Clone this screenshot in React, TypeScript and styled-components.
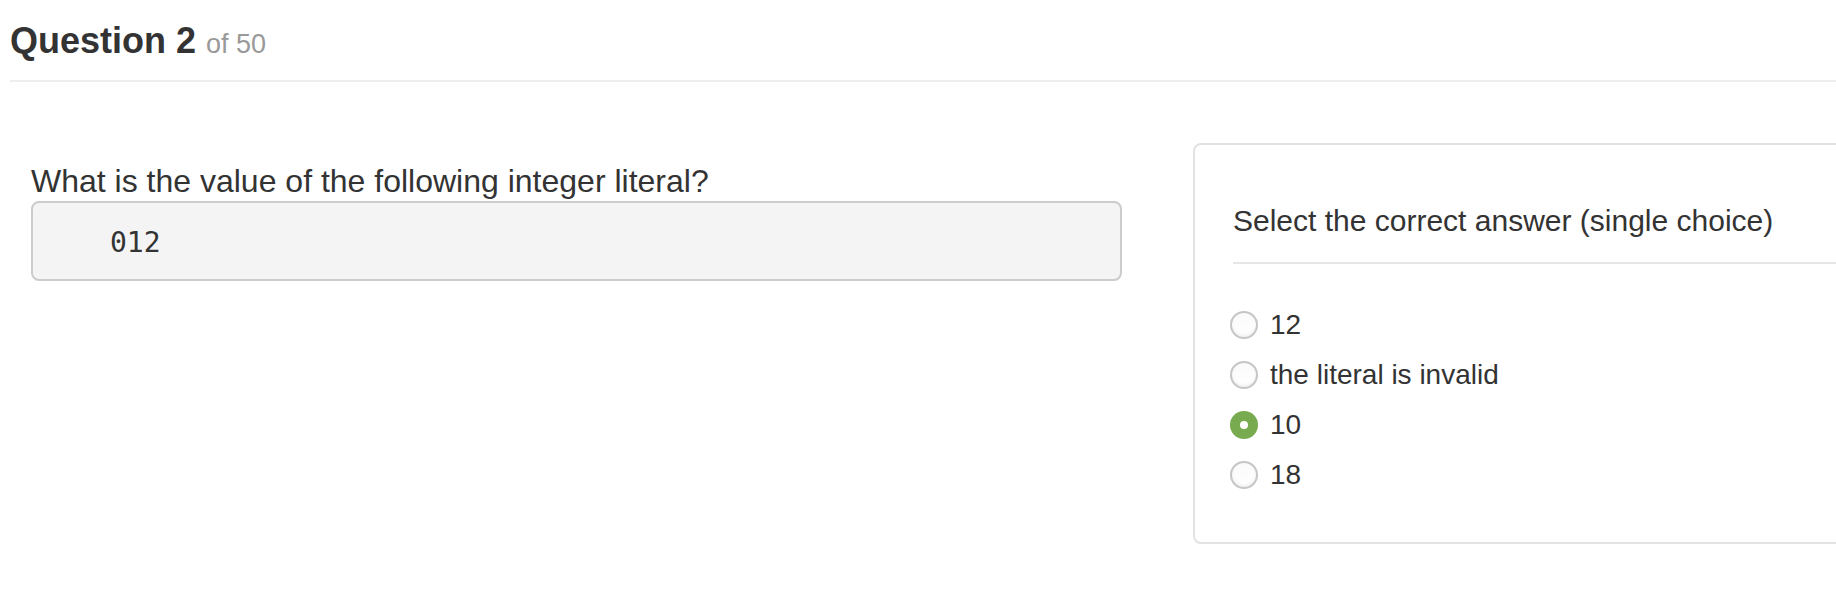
import React from "react";
import styled, { createGlobalStyle } from "styled-components";

const GlobalStyle = createGlobalStyle`
    html, body {
        margin: 0;
        padding: 0;
        background: #fff;
        overflow: hidden;
    }
    body {
        font-family: "Liberation Sans", Arial, Helvetica, sans-serif;
        color: #333;
    }
`;

const Page = styled.div`
    width: 100%;
    height: 598px;
    overflow: hidden;
`;

const Header = styled.header`
    margin-left: 10px;
    padding: 21px 0 19px;
    border-bottom: 2px solid #eee;
`;

const Title = styled.h1`
    margin: 0;
    font-size: 36px;
    line-height: 40px;
    font-weight: 700;
    color: #333;
`;

const Counter = styled.small`
    font-size: 27px;
    line-height: 1;
    font-weight: 400;
    color: #999;
`;

const Main = styled.main`
    display: flex;
    align-items: flex-start;
    gap: 71px;
    margin-top: 61px;
    padding-left: 31px;
`;

const QuestionColumn = styled.section`
    flex: 0 0 1091px;
    padding-top: 20px;
`;

const QuestionText = styled.p`
    margin: 0 0 2px;
    font-size: 32px;
    line-height: 36px;
`;

const CodeBlock = styled.pre`
    box-sizing: border-box;
    height: 80px;
    margin: 0;
    padding: 20px 18px 16px 77px;
    background: #f4f4f4;
    border: 2px solid #ccc;
    border-radius: 8px;
    font-family: "DejaVu Sans Mono", "Liberation Mono", monospace;
    font-size: 28px;
    line-height: 40px;
    color: #333;
`;

const AnswerPanel = styled.section`
    flex: 0 0 720px;
    box-sizing: border-box;
    padding: 59px 0 42px 38px;
    border: 2px solid #e2e2e2;
    border-radius: 8px;
    background: #fff;
`;

const PanelTitle = styled.h2`
    margin: 0;
    font-size: 30px;
    line-height: 34px;
    font-weight: 400;
    color: #333;
`;

const Rule = styled.hr`
    margin: 24px 0 0;
    border: 0;
    border-top: 2px solid #e6e6e6;
`;

const OptionList = styled.div`
    display: flex;
    flex-direction: column;
    margin-top: 36px;
    margin-left: -3px;
`;

const Option = styled.label`
    display: flex;
    align-items: center;
    gap: 12px;
    height: 50px;
    font-size: 28px;
    line-height: 50px;
    color: #333;
    cursor: pointer;
`;

const Radio = styled.input.attrs({ type: "radio" })`
    appearance: none;
    box-sizing: border-box;
    width: 28px;
    height: 28px;
    margin: 0;
    flex-shrink: 0;
    border-radius: 50%;
    border: 2px solid #c6c6c6;
    background: linear-gradient(#fafafa, #fff);
    box-shadow: inset 0 -2px 3px rgba(0, 0, 0, 0.06);
    position: relative;

    &:checked {
        border: 0;
        background: #78ab4f;
        box-shadow: none;
    }

    &:checked::after {
        content: "";
        position: absolute;
        left: 10px;
        top: 10px;
        width: 8px;
        height: 8px;
        border-radius: 50%;
        background: #fff;
    }
`;

const options = ["12", "the literal is invalid", "10", "18"];

export default function App() {
    return (
        <Page>
            <GlobalStyle />
            <Header>
                <Title>
                    Question 2 <Counter>of 50</Counter>
                </Title>
            </Header>

            <Main>
                <QuestionColumn>
                    <QuestionText>What is the value of the following integer literal?</QuestionText>
                    <CodeBlock>012</CodeBlock>
                </QuestionColumn>

                <AnswerPanel>
                    <PanelTitle>Select the correct answer (single choice)</PanelTitle>
                    <Rule />
                    <OptionList>
                        {options.map((opt) => (
                            <Option key={opt}>
                                <Radio name="answer" value={opt} defaultChecked={opt === "10"} />
                                {opt}
                            </Option>
                        ))}
                    </OptionList>
                </AnswerPanel>
            </Main>
        </Page>
    );
}
